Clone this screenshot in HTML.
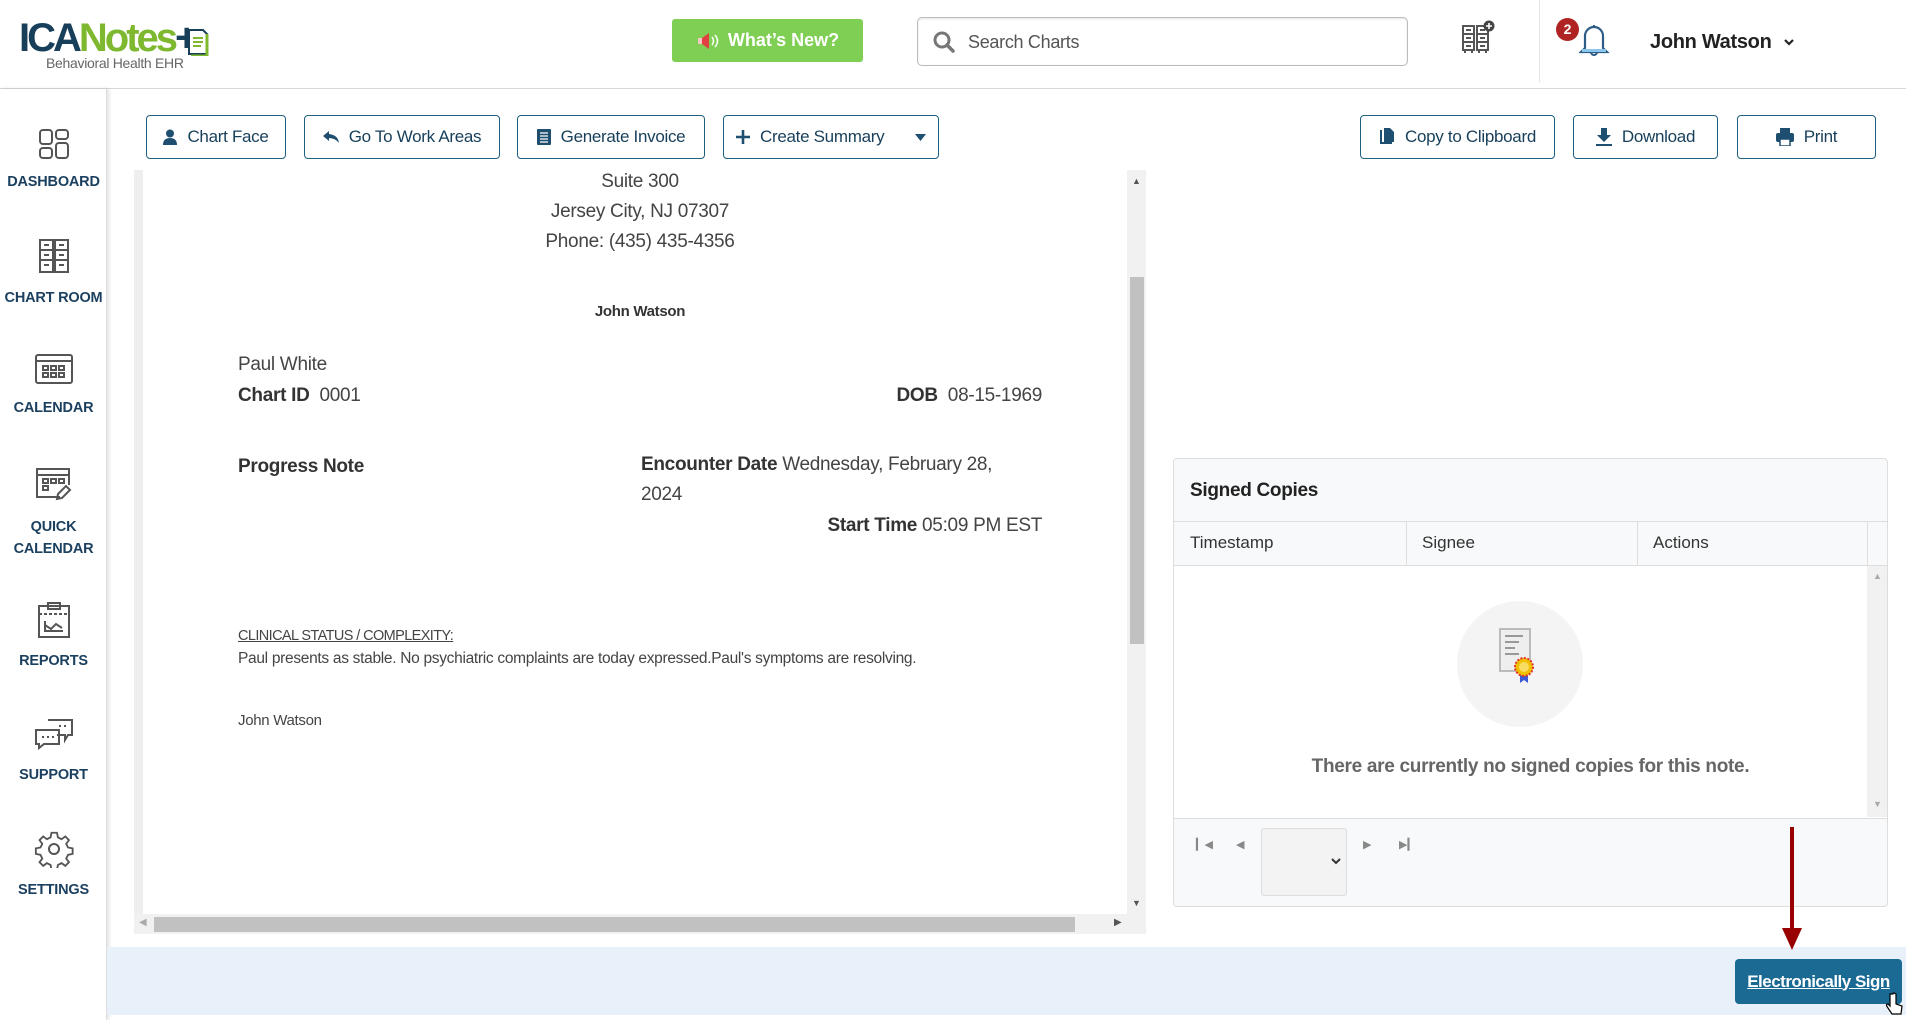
<!DOCTYPE html>
<html><head><meta charset="utf-8">
<style>
*{box-sizing:border-box;margin:0;padding:0}
body{width:1906px;height:1020px;overflow:hidden;background:#fff;font-family:"Liberation Sans",Arial,sans-serif;position:relative;color:#333}
.abs{position:absolute}
.hdr{left:0;top:0;width:1906px;height:89px;border-bottom:1px solid #d8d8d8;background:#fff}
.side{left:0;top:89px;width:107px;height:931px;background:#fff;box-shadow:2px 0 4px rgba(0,0,0,.12);border-right:1px solid #ddd}
.nav{position:absolute;left:0;width:107px;text-align:center;font-size:14.5px;font-weight:bold;color:#1b3f5e;letter-spacing:-.2px}
.nav svg{display:block;margin:0 auto 14px}
.btn{position:absolute;top:115px;height:44px;border:1px solid #1f5f80;border-radius:4px;background:#fff;color:#173f5a;font-size:17px;display:flex;align-items:center;justify-content:center;gap:10px;letter-spacing:-.3px}
.doc{left:134px;top:170px;width:1012px;height:764px;background:#fff;border-left:9px solid #eee}
.dt{position:absolute;font-size:19px;color:#444;letter-spacing:-.3px;white-space:nowrap}
.b{font-weight:bold;color:#333}
</style></head><body>

<div class="abs hdr"></div>
<div class="abs" style="left:19px;top:16px;font-size:40px;font-weight:bold;letter-spacing:-3px;line-height:44px">
<span style="color:#173f5a">ICA</span><span style="color:#7db82f">Notes</span><span style="color:#173f5a">+</span></div>
<svg class="abs" style="left:183px;top:26px" width="28" height="30" viewBox="0 0 28 30"><path d="M6 4h14l4 4v20H6z" fill="#fff" stroke="#173f5a" stroke-width="2"/><path d="M10 12h10M10 16h10M10 20h8" stroke="#7db82f" stroke-width="2"/><path d="M24 8v22H8" stroke="#7db82f" stroke-width="3" fill="none"/></svg>
<div class="abs" style="left:46px;top:55px;font-size:14px;color:#666;letter-spacing:-.3px">Behavioral Health EHR</div>

<div class="abs" style="left:672px;top:19px;width:191px;height:43px;background:#80cf55;border-radius:3px;color:#fff;font-weight:bold;font-size:18px;display:flex;align-items:center;justify-content:center;gap:8px">
<svg width="24" height="20" viewBox="0 0 24 20"><path d="M2 7h4l7-5v16l-7-5H2z" fill="#e04040"/><rect x="2" y="7" width="4" height="6" fill="#fff" opacity=".7"/><path d="M16 6q3 4 0 8M19 4q5 6 0 12" stroke="#fff" stroke-width="1.5" fill="none"/></svg>What’s New?</div>

<div class="abs" style="left:917px;top:17px;width:491px;height:49px;border:1px solid #bbb;border-radius:5px;box-shadow:inset 0 1px 2px rgba(0,0,0,.1)"></div>
<svg class="abs" style="left:932px;top:30px" width="24" height="24" viewBox="0 0 24 24"><circle cx="10" cy="10" r="7" stroke="#777" stroke-width="3" fill="none"/><path d="M15 15l6 6" stroke="#777" stroke-width="3.5" stroke-linecap="round"/></svg>
<div class="abs" style="left:968px;top:32px;font-size:18px;color:#555;letter-spacing:-.3px">Search Charts</div>

<svg class="abs" style="left:1460px;top:20px" width="36" height="36" viewBox="0 0 36 36"><g fill="none" stroke="#555" stroke-width="2"><rect x="3" y="6" width="11" height="24"/><rect x="17" y="6" width="11" height="24"/><path d="M3 14h11M3 22h11M17 14h11M17 22h11M6 10h5M6 18h5M6 26h5M20 10h5M20 18h5M20 26h5M5 30v3M12 30v3M19 30v3M26 30v3"/></g><circle cx="29" cy="6" r="5.5" fill="#444"/><path d="M29 3v6M26 6h6" stroke="#fff" stroke-width="1.6"/></svg>
<div class="abs" style="left:1539px;top:0;width:1px;height:82px;background:#e3e3e3"></div>
<svg class="abs" style="left:1573px;top:22px" width="40" height="38" viewBox="0 0 40 38"><path d="M8 30h26l-4-4V14a9 9 0 0 0-18 0v12z" fill="none" stroke="#2c5d87" stroke-width="2.2"/><rect x="9" y="27" width="24" height="3" fill="#8cc6ea"/><path d="M18 30a3 3 0 0 0 6 0" fill="none" stroke="#2c5d87" stroke-width="2"/><path d="M21 5v-2" stroke="#2c5d87" stroke-width="2"/></svg>
<div class="abs" style="left:1556px;top:18px;width:23px;height:23px;border-radius:50%;background:#b02323;color:#fff;font-size:14px;font-weight:bold;text-align:center;line-height:23px">2</div>
<div class="abs" style="left:1650px;top:31px;font-size:20px;font-weight:bold;color:#222;letter-spacing:-.3px">John Watson</div>
<svg class="abs" style="left:1783px;top:37px" width="12" height="10" viewBox="0 0 12 10"><path d="M2 3l4 4 4-4" stroke="#222" stroke-width="2.2" fill="none"/></svg>

<div class="abs side"></div>
<div class="nav" style="top:128px"><svg width="34" height="32" viewBox="0 0 34 32"><g fill="none" stroke="#555" stroke-width="2"><rect x="3" y="2" width="12" height="14" rx="3"/><rect x="19" y="2" width="12" height="9" rx="3"/><rect x="3" y="20" width="12" height="10" rx="3"/><rect x="19" y="15" width="12" height="15" rx="3"/></g></svg>DASHBOARD</div>
<div class="nav" style="top:238px"><svg width="34" height="38" viewBox="0 0 34 38"><g fill="none" stroke="#555" stroke-width="2"><rect x="3" y="2" width="13" height="32"/><rect x="18" y="2" width="13" height="32"/><path d="M3 12h13M3 22h13M18 12h13M18 22h13M7 7h5M7 17h5M7 27h5M22 7h5M22 17h5M22 27h5"/></g></svg>CHART ROOM</div>
<div class="nav" style="top:352px"><svg width="40" height="34" viewBox="0 0 40 34"><g fill="none" stroke="#555" stroke-width="2"><rect x="2" y="3" width="36" height="28" rx="2"/><path d="M2 9h36"/><rect x="9" y="14" width="5" height="4"/><rect x="17" y="14" width="5" height="4"/><rect x="25" y="14" width="5" height="4"/><rect x="9" y="21" width="5" height="4"/><rect x="17" y="21" width="5" height="4"/><rect x="25" y="21" width="5" height="4"/></g></svg>CALENDAR</div>
<div class="nav" style="top:466px;line-height:22px"><svg width="40" height="36" viewBox="0 0 40 36"><g fill="none" stroke="#555" stroke-width="2"><path d="M26 31H3V3h32v16"/><path d="M3 9h32"/><rect x="9" y="13" width="5" height="4"/><rect x="17" y="13" width="5" height="4"/><rect x="25" y="13" width="5" height="4"/><rect x="9" y="20" width="5" height="4"/><path d="M24 28l8-8 4 4-8 8-5 1z"/></g></svg>QUICK<br>CALENDAR</div>
<div class="nav" style="top:601px"><svg width="36" height="38" viewBox="0 0 36 38"><g fill="none" stroke="#555" stroke-width="2"><rect x="3" y="5" width="30" height="31"/><rect x="12" y="2" width="12" height="6"/><path d="M3 13h30" stroke-dasharray="3 2"/><path d="M9 20v10h18M9 24l6 4 5-5 6 4"/></g></svg>REPORTS</div>
<div class="nav" style="top:717px"><svg width="42" height="36" viewBox="0 0 42 36"><g fill="none" stroke="#555" stroke-width="2"><path d="M15 3h24v15h-4l-3 5v-5H24"/><path d="M3 13h23v14H11l-5 4v-4H3z"/><path d="M9 20h2M14 20h2M19 20h2M26 9h2M31 9h2" /></g></svg>SUPPORT</div>
<div class="nav" style="top:830px"><svg width="40" height="38" viewBox="0 0 40 38"><g fill="none" stroke="#555" stroke-width="2"><path d="M17 3h6l1 5 4 2 4-3 4 4-3 4 2 4 5 1v6l-5 1-2 4 3 4-4 4-4-3-4 2-1 5h-6l-1-5-4-2-4 3-4-4 3-4-2-4-5-1v-6l5-1 2-4-3-4 4-4 4 3 4-2z" transform="scale(.92) translate(2 0)"/><circle cx="20" cy="19" r="5"/></g></svg>SETTINGS</div>

<div class="btn" style="left:146px;width:140px"><svg width="14" height="16" viewBox="0 0 14 16"><circle cx="7" cy="4.5" r="4" fill="#1f4f70"/><path d="M0 16q0-7 7-7t7 7z" fill="#1f4f70"/></svg>Chart Face</div>
<div class="btn" style="left:304px;width:196px"><svg width="16" height="14" viewBox="0 0 16 14"><path d="M6 1L0 6l6 5V8q6 0 10 5-1-8-10-9z" fill="#1f4f70"/></svg>Go To Work Areas</div>
<div class="btn" style="left:517px;width:188px"><svg width="14" height="16" viewBox="0 0 14 16"><rect x="0" y="0" width="14" height="16" rx="1" fill="#1f4f70"/><path d="M3 4h8M3 7h8M3 10h8M3 13h8" stroke="#fff" stroke-width="1.3"/></svg>Generate Invoice</div>
<div class="btn" style="left:723px;width:216px;justify-content:flex-start;padding-left:12px"><svg width="14" height="14" viewBox="0 0 14 14"><path d="M7 0v14M0 7h14" stroke="#1f4f70" stroke-width="2.6"/></svg>Create Summary<svg style="position:absolute;right:12px;top:18px" width="11" height="7" viewBox="0 0 11 7"><path d="M0 0h11L5.5 7z" fill="#1f4f70"/></svg></div>
<div class="btn" style="left:1360px;width:195px"><svg width="16" height="18" viewBox="0 0 16 18"><path d="M1 2h2v12h10v2H1z" fill="#1f4f70"/><path d="M5 0h6l4 4v10H5z" fill="#1f4f70"/></svg>Copy to Clipboard</div>
<div class="btn" style="left:1573px;width:145px"><svg width="16" height="18" viewBox="0 0 16 18"><path d="M5 0h6v7h4L8 14 1 7h4z" fill="#1f4f70"/><rect x="0" y="16" width="16" height="2" fill="#1f4f70"/></svg>Download</div>
<div class="btn" style="left:1737px;width:139px"><svg width="18" height="18" viewBox="0 0 18 18"><rect x="4" y="0" width="10" height="5" fill="#1f4f70"/><rect x="0" y="5" width="18" height="9" rx="2" fill="#1f4f70"/><rect x="4" y="11" width="10" height="7" fill="#fff" stroke="#1f4f70" stroke-width="1.5"/></svg>Print</div>

<div class="abs doc"></div>
<div class="abs" style="left:1127px;top:170px;width:19px;height:744px;background:#f1f1f1"></div>
<div class="abs" style="left:1130px;top:277px;width:14px;height:367px;background:#c1c1c1"></div>
<div class="abs" style="left:1132px;top:176px;font-size:9px;color:#555">▲</div>
<div class="abs" style="left:1132px;top:898px;font-size:9px;color:#555">▼</div>
<div class="abs" style="left:134px;top:914px;width:1012px;height:20px;background:#f1f1f1"></div>
<div class="abs" style="left:154px;top:917px;width:921px;height:15px;background:#c1c1c1"></div>
<div class="abs" style="left:139px;top:917px;font-size:10px;color:#aaa">◀</div>
<div class="abs" style="left:1114px;top:917px;font-size:10px;color:#555">▶</div>

<div class="dt" style="left:440px;width:400px;text-align:center;top:171px">Suite 300</div>
<div class="dt" style="left:440px;width:400px;text-align:center;top:201px">Jersey City, NJ 07307</div>
<div class="dt" style="left:440px;width:400px;text-align:center;top:231px">Phone: (435) 435-4356</div>
<div class="dt b" style="left:440px;width:400px;text-align:center;top:303px;font-size:15px">John Watson</div>
<div class="dt" style="left:238px;top:354px">Paul White</div>
<div class="dt" style="left:238px;top:385px"><span class="b">Chart ID</span>&nbsp; 0001</div>
<div class="dt" style="right:864px;top:385px"><span class="b">DOB</span>&nbsp; 08-15-1969</div>
<div class="dt b" style="left:238px;top:456px">Progress Note</div>
<div class="dt" style="left:641px;top:454px"><span class="b">Encounter Date</span> Wednesday, February 28,</div>
<div class="dt" style="left:641px;top:484px">2024</div>
<div class="dt" style="right:864px;top:515px"><span class="b">Start Time</span> 05:09 PM EST</div>
<div class="dt" style="left:238px;top:628px;font-size:14.5px;text-decoration:underline;color:#444;letter-spacing:-.6px">CLINICAL STATUS / COMPLEXITY:</div>
<div class="dt" style="left:238px;top:650px;font-size:15.5px">Paul presents as stable. No psychiatric complaints are today expressed.Paul's symptoms are resolving.</div>
<div class="dt" style="left:238px;top:712px;font-size:15px">John Watson</div>

<div class="abs" style="left:1173px;top:458px;width:715px;height:449px;border:1px solid #ddd;border-radius:4px;background:#f8f9fa;overflow:hidden">
 <div style="position:absolute;left:16px;top:21px;font-size:19px;font-weight:bold;color:#222;letter-spacing:-.3px">Signed Copies</div>
 <div style="position:absolute;left:0;top:62px;width:715px;height:45px;border-top:1px solid #ddd;border-bottom:1px solid #ddd;background:#f8f9fa;font-size:17px;color:#333">
  <div style="position:absolute;left:16px;top:11px">Timestamp</div>
  <div style="position:absolute;left:232px;top:0;width:1px;height:45px;background:#ddd"></div>
  <div style="position:absolute;left:248px;top:11px">Signee</div>
  <div style="position:absolute;left:463px;top:0;width:1px;height:45px;background:#ddd"></div>
  <div style="position:absolute;left:479px;top:11px">Actions</div>
  <div style="position:absolute;left:693px;top:0;width:1px;height:45px;background:#ddd"></div>
 </div>
 <div style="position:absolute;left:0;top:107px;width:715px;height:252px;background:#fff"></div>
 <div style="position:absolute;left:0;top:359px;width:715px;height:1px;background:#ddd"></div>
</div>
<div class="abs" style="left:1867px;top:566px;width:20px;height:251px;background:#f1f1f1"></div>
<div class="abs" style="left:1873px;top:571px;font-size:9px;color:#aaa">▲</div>
<div class="abs" style="left:1873px;top:799px;font-size:9px;color:#aaa">▼</div>
<div class="abs" style="left:1457px;top:601px;width:126px;height:126px;border-radius:50%;background:#f4f4f4"></div>
<svg class="abs" style="left:1490px;top:615px" width="60" height="85" viewBox="0 0 60 85"><rect x="10" y="14" width="30" height="42" fill="#eee" stroke="#bbb" stroke-width="2"/><path d="M15 21h18M15 27h14M15 33h10M15 39h14" stroke="#999" stroke-width="2"/><path d="M30 56v12l4-3 4 3V56" fill="#3a5ad8"/><circle cx="34" cy="52" r="9" fill="#f0c000" stroke="#e03030" stroke-width="2" stroke-dasharray="2 1.5"/><circle cx="34" cy="52" r="5" fill="#f8dd60"/></svg>
<div class="abs" style="left:1173px;width:715px;text-align:center;top:756px;font-size:19px;font-weight:bold;color:#666;letter-spacing:-.3px">There are currently no signed copies for this note.</div>
<div class="abs" style="left:1196px;top:838px;font-size:11px;color:#888">▎◀</div>
<div class="abs" style="left:1236px;top:838px;font-size:11px;color:#888">◀</div>
<div class="abs" style="left:1261px;top:828px;width:86px;height:68px;border:1px solid #ddd;border-radius:3px;background:#f3f3f3"></div>
<svg class="abs" style="left:1330px;top:857px" width="12" height="9" viewBox="0 0 12 9"><path d="M2 2l4 4 4-4" stroke="#333" stroke-width="2" fill="none"/></svg>
<div class="abs" style="left:1363px;top:838px;font-size:11px;color:#888">▶</div>
<div class="abs" style="left:1399px;top:838px;font-size:11px;color:#888">▶▎</div>

<div class="abs" style="left:107px;top:947px;width:1799px;height:68px;background:#e8f0f9"></div>
<div class="abs" style="left:1735px;top:959px;width:167px;height:45px;background:#1a6a94;border-radius:4px;color:#fff;font-size:17px;font-weight:bold;text-decoration:underline;display:flex;align-items:center;justify-content:center;letter-spacing:-.5px">Electronically Sign</div>
<div class="abs" style="left:1790px;top:827px;width:4px;height:104px;background:#990000"></div>
<svg class="abs" style="left:1782px;top:928px" width="20" height="22" viewBox="0 0 20 22"><path d="M0 0h20L10 22z" fill="#990000"/></svg>
<svg class="abs" style="left:1885px;top:992px" width="18" height="24" viewBox="0 0 18 24"><path d="M5 2v12l-2-2q-3 0 0 4l4 6h9l1-8-6-2V2q-3-2-3 0z" fill="#fff" stroke="#000" stroke-width="1.2"/></svg>
</body></html>
